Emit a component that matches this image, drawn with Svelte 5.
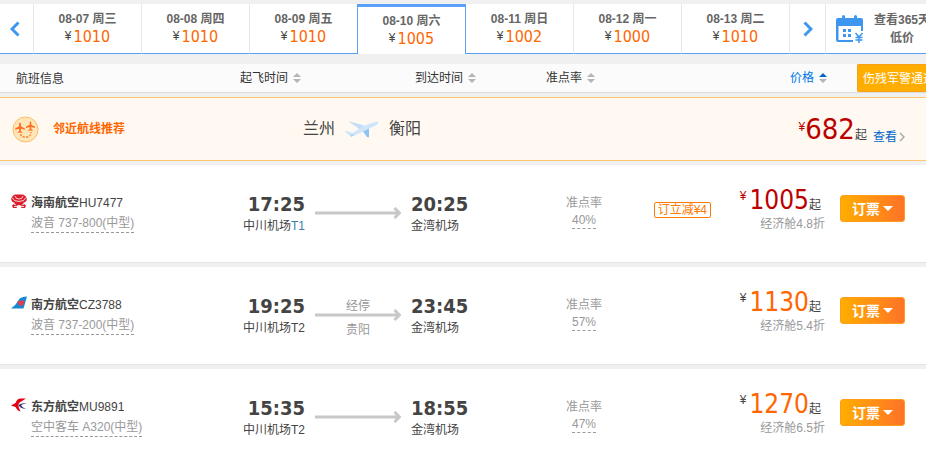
<script>
  const days = [
    { date: '08-07 周三', price: 1010 },
    { date: '08-08 周四', price: 1010 },
    { date: '08-09 周五', price: 1010 },
    { date: '08-10 周六', price: 1005 },
    { date: '08-11 周日', price: 1002 },
    { date: '08-12 周一', price: 1000 },
    { date: '08-13 周二', price: 1010 }
  ];
  let selected = $state(3);

  const flights = [
    { logo: 'hu', airline: '海南航空', no: 'HU7477', plane: '波音 737-800(中型)', dep: '17:25', from: '中川机场', terminal: 'T1', arr: '20:25', to: '金湾机场', rate: '40%', tag: '¥4', price: 1005, cabin: '经济舱4.8折', lowest: true },
    { logo: 'cz', airline: '南方航空', no: 'CZ3788', plane: '波音 737-200(中型)', dep: '19:25', from: '中川机场', terminal: 'T2', stop: '贵阳', arr: '23:45', to: '金湾机场', rate: '57%', price: 1130, cabin: '经济舱5.4折' },
    { logo: 'mu', airline: '东方航空', no: 'MU9891', plane: '空中客车 A320(中型)', dep: '15:35', from: '中川机场', terminal: 'T2', arr: '18:55', to: '金湾机场', rate: '47%', price: 1270, cabin: '经济舱6.5折' }
  ];
</script>

{#snippet sortIcon()}
  <svg class="sort" width="8" height="10" viewBox="0 0 8 10" aria-hidden="true">
    <path class="up" d="M0 4 4 0l4 4z" /><path d="M0 6h8l-4 4z" />
  </svg>
{/snippet}

<div class="page">
  <nav class="dates" aria-label="日期">
    <button class="step prev" aria-label="前一天">
      <svg width="10" height="16" viewBox="0 0 10 16"><path d="M8.5 1.5 2 8l6.500 6.500" /></svg>
    </button>
    {#each days as day, i}
      <button class="day" class:active={selected === i} onclick={() => (selected = i)}>
        <b>{day.date}</b>
        <span class="fare"><i>¥</i>{day.price}</span>
      </button>
    {/each}
    <button class="step next" aria-label="后一天">
      <svg width="10" height="16" viewBox="0 0 10 16"><path d="M1.500 1.500 8 8l-6.500 6.500" /></svg>
    </button>
    <a class="calendar" href="#calendar">
      <svg width="28" height="28" viewBox="0 0 28 28" aria-hidden="true">
        <path fill="#3e97ee" d="M2 3h4V1.500a1.500 1.500 0 0 1 3 0V3h9V1.500a1.500 1.500 0 0 1 3 0V3h4q2 0 2 2v11h-2v-5H2.500v14H17v2H2q-2 0-2-2V5q0-2 2-2z" />
        <path fill="#3e97ee" d="M7 14h3v3H7zM12 14h3v3h-3zM7 19h3v3H7zM12 19h3v3h-3z" />
        <path fill="none" stroke="#3e97ee" stroke-width="1.500" d="m19.500 18 3.500 4 3.500-4M23 22v6M19.500 22.500h7M19.500 25h7" />
      </svg>
      <span>查看365天<br />低价</span>
    </a>
  </nav>

  <div class="head">
    <span class="h-info">航班信息</span>
    <button class="h-dep">起飞时间{@render sortIcon()}</button>
    <button class="h-arr">到达时间{@render sortIcon()}</button>
    <button class="h-rate">准点率{@render sortIcon()}</button>
    <button class="h-price sorted">价格{@render sortIcon()}</button>
    <a class="notice" href="#notice">伤残军警通道</a>
  </div>

  <section class="nearby">
    <svg width="27" height="27" viewBox="0 0 27 27" aria-hidden="true">
      <circle cx="13.500" cy="13.500" r="12.500" fill="#ffe6b8" stroke="#fdbc6c" />
      <g fill="#ff6d22">
        <path d="M8 6.500q.9 0 .9 1.500v2.200l4 2.300v1.300l-4-1v2.400l1.400 1v.9L8 16.500l-2.300.6v-.9l1.400-1v-2.400l-4 1v-1.300l4-2.300V8q0-1.500.9-1.500z" />
        <path d="M18.500 5.500q.8 0 .8 1.300v1.900l3.700 2v1.200l-3.700-.9v2.200l1.300.9v.8l-2.100-.5-2.100.5v-.8l1.300-.9V11l-3.700.9v-1.200l3.700-2V6.800q0-1.300.8-1.300z" />
      </g>
      <path fill="none" stroke="#ff6d22" stroke-width="1.300" stroke-dasharray="2 1.500" d="M8.500 18q1 3 4 3h3q3 0 3.500-5" />
    </svg>
    <strong>邻近航线推荐</strong>
    <div class="cities">
      <span>兰州</span>
      <svg width="34" height="18" viewBox="0 0 34 18" aria-hidden="true">
        <path fill="#c2ddf7" d="M3 1l16 4.500-4 4z" />
        <path fill="#cfe5fa" d="M1 11l3 .5 3.500 1.500L19 5.800 28 2.500q5-1.500 5.500 0 0 1.700-5 4L14 13.500q-5 2.300-8.500 2.500L2 13.500 0 11.500z" />
        <path fill="#8fc4f2" d="M18 11.500l6-3v9l-2-.5z" />
        <path fill="#a9d1f6" d="M5 15l4-.5 1 .5-4 2z" />
      </svg>
      <span>衡阳</span>
    </div>
    <div class="best"><i>¥</i><span class="amount">682</span><span>起</span></div>
    <a class="view" href="#view">查看<svg width="6" height="10" viewBox="0 0 6 10" aria-hidden="true"><path d="m1 1 4 4-4 4" /></svg></a>
  </section>

  {#each flights as f}
    <article class="flight">
      <div class="info">
        <svg width="16" height="14" viewBox="0 0 16 14" aria-hidden="true">
          {#if f.logo === 'hu'}
            <path fill="#dc1f2d" d="M4 .5h8Q16 2 15.800 6q-.8 2.500-4 3l3.200 2.500-1 2.500H10l1-2-3-1-3 1 1 2H2l-1-2.500L4.200 9Q1 8.500.2 6 0 2 4 .5z" />
            <path fill="none" stroke="#fff" stroke-width=".8" d="M1 3.500q1.500 4 7 4t7-4M4 2q.5 3 4 3t4-3M3 10l2 1M13 10l-2 1M3 12.500h2M11 12.500h2" />
            <circle cx="8" cy="2.500" r="1.700" fill="#dc1f2d" />
          {:else if f.logo === 'cz'}
            <path fill="#178bd0" d="M0 12.500Q5 9 8 3.500 9.500.8 16 .5L12.500 12.500z" />
            <path fill="#e73b50" d="M6 6l3-1.500 1 1 1-1.500 2.500 1-1 3.500-2 1-1 1.500-.5-2.500-2 1 .5-2z" />
          {:else}
            <path fill="#e60012" d="M15 .5H9Q6 .8 4.500 5L0 7.500 4.500 9q2 4 5 4.500L8 10Q6 5 11 3z" />
            <path fill="#24246e" d="M7.500 7Q11 4.500 16 5.500q-5 .3-6 2 1.500 2 5 3.500Q9 10.500 7.500 7z" />
          {/if}
        </svg>
        <div>
          <div class="name"><strong>{f.airline}</strong>{f.no}</div>
          <span class="plane">{f.plane}</span>
        </div>
      </div>
      <div class="dep"><time>{f.dep}</time><span>{f.from}<em class:first={f.terminal === 'T1'}>{f.terminal}</em></span></div>
      <div class="route">
        <span>{f.stop ? '经停' : ''}</span>
        <svg width="86" height="12" viewBox="0 0 86 12" aria-hidden="true"><path d="M0 6h84M79.500 1l5 5-5 5" /></svg>
        <span>{f.stop ?? ''}</span>
      </div>
      <div class="arr"><time>{f.arr}</time><span>{f.to}</span></div>
      <div class="rate"><span>准点率</span><span class="percent">{f.rate}</span></div>
      <div class="promo">{#if f.tag}<span>订立减{f.tag}</span>{/if}</div>
      <div class="price" class:lowest={f.lowest}>
        <div class="sum"><i>¥</i><span class="amount">{f.price}</span><span>起</span></div>
        <span class="cabin">{f.cabin}</span>
      </div>
      <button class="book">订票<span class="caret"></span></button>
    </article>
  {/each}
</div>

<style>
  :global(body) { background: #f0f0f0; }
  .page {
    padding-top: 4px;
    overflow: hidden;
    color: #444;
    font: 12px/18px "Liberation Sans", "Noto Sans CJK SC", sans-serif;
  }
  button { margin: 0; padding: 0; border: 0; background: none; color: inherit; font: inherit; cursor: pointer; }
  a { color: inherit; text-decoration: none; }
  i, em { font-style: normal; }
  svg { display: block; flex: none; }
  span { white-space: nowrap; }

  .dates { display: flex; height: 50px; background: #fff; }
  .dates > * { box-sizing: border-box; border-bottom: 1px solid #579ff0; border-left: 1px solid #e8e8e8; }
  .step { flex: 0 0 36px; display: flex; align-items: center; justify-content: center; }
  .step.prev { flex-basis: 33px; border-left: 0; padding-right: 4px; }
  .step path { fill: none; stroke: #3e97ee; stroke-width: 3; }
  .day { flex: 0 0 108px; display: flex; flex-direction: column; align-items: center; padding-top: 6px; }
  .day b { color: #666; }
  .day.active {
    flex-basis: 109px;
    margin-right: -1px;
    z-index: 1;
    border: solid #5a9ff8;
    border-width: 3px 1px 0;
    padding-top: 5px;
    background: #fff;
  }
  .fare { display: flex; gap: 2px; color: #ff6600; font-family: "DejaVu Sans Condensed", "Noto Sans", sans-serif; font-size: 16px; }
  .fare i { color: #444; font-family: "Liberation Sans", sans-serif; font-size: 12px; line-height: 16px; }
  .calendar { flex: 1 0 110px; display: flex; align-items: center; gap: 10px; padding-left: 10px; color: #666; font-weight: bold; text-align: center; }

  .head { display: flex; height: 28px; margin: 10px 0 4px; border-bottom: 1px solid #ddd; background: #fbfbfb; color: #333; line-height: 30px; }
  .head button { display: flex; align-items: center; gap: 5px; text-align: left; }
  .h-info { flex: 0 0 224px; padding-left: 16px; }
  .h-dep { flex: 0 0 175px; }
  .h-arr { flex: 0 0 131px; }
  .h-rate { flex: 1 0 131px; }
  .h-price { flex: 0 0 67px; }
  .sort { fill: #b5b5b5; }
  .head .sorted { color: #0077e6; }
  .sorted .up { fill: #0066cc; }
  .notice { flex: 0 0 69px; box-sizing: border-box; height: 28px; padding-left: 5px; overflow: hidden; border: 1px solid #f9a01b; border-width: 1px 0 1px 1px; border-radius: 2px 0 0 2px; background: #ffae00; color: #fff; line-height: 28px; white-space: nowrap; }

  .nearby { display: flex; align-items: center; height: 62px; padding: 0 21px 0 12px; border: solid #ffc670; border-width: 1px 0; background: #fff9f1; }
  .nearby strong { flex: 0 0 250px; margin-left: 14px; color: #ff6600; line-height: 20px; }
  .cities { display: flex; align-items: center; gap: 10px; font-size: 16px; line-height: 20px; }
  .best { display: flex; align-items: baseline; margin-left: auto; }
  .best i { align-self: flex-start; color: #b00; line-height: 30px; }
  .best .amount { color: #b00; font-family: "DejaVu Sans Condensed", "Noto Sans", sans-serif; font-size: 29px; line-height: 34px; }
  .view { display: flex; align-items: center; align-self: flex-end; gap: 2px; margin: 0 0 14px 6px; color: #0066cc; }
  .view path { fill: none; stroke: #aaa; stroke-width: 1.5; }

  .flight {
    display: grid;
    grid-template-columns: 232px 72px 86px 155px 56px minmax(100px, 1fr) 113px 80px;
    height: 97px;
    margin-top: 4px;
    padding: 0 21px 0 11px;
    border-bottom: 1px solid #e4e4e4;
    background: #fff;
  }
  .info { display: flex; gap: 4px; padding-top: 29px; }
  .name { margin-bottom: 2px; }
  .plane { display: inline-block; border-bottom: 1px dashed #999; color: #999; }
  .dep, .arr { display: flex; flex-direction: column; padding-top: 27px; }
  .dep { align-items: flex-end; padding-right: 10px; }
  .arr { padding-left: 10px; }
  time { font: bold 20px/25px "DejaVu Sans Condensed", "DejaVu Sans", sans-serif; }
  .first { color: #3a7cb0; }
  .route { display: flex; flex-direction: column; align-items: center; padding-top: 30px; color: #999; }
  .route span { height: 12px; }
  .route path { fill: none; stroke: #c8c8c8; stroke-width: 3; }
  .rate { display: flex; flex-direction: column; align-items: center; padding-top: 29px; color: #999; }
  .percent { height: 16px; line-height: 16px; border-bottom: 1px dashed #999; }
  .promo { padding-top: 36px; padding-right: 1px; text-align: right; }
  .promo span { display: inline-block; padding: 0 3px; border: 1px solid #ff7a00; border-radius: 2px; color: #ff7a00; line-height: 14px; }
  .price { display: flex; flex-direction: column; align-items: flex-end; padding-top: 20px; }
  .sum { display: flex; align-items: baseline; padding-right: 4px; }
  .sum i { align-self: flex-start; margin-right: 3px; line-height: 22px; }
  .sum .amount { color: #ff6600; font-family: "DejaVu Sans Condensed", "Noto Sans", sans-serif; font-size: 26px; line-height: 30px; }
  .lowest i, .lowest .amount { color: #b00; }
  .cabin { color: #999; }
  .book {
    display: flex;
    align-items: center;
    justify-content: center;
    gap: 3px;
    width: 65px;
    height: 27px;
    margin: 30px 0 0 15px;
    border: 1px solid #ff9c1a;
    border-radius: 3px;
    background: linear-gradient(90deg, #ffae00, #ff7328);
    color: #fff;
    font-size: 14px;
    font-weight: bold;
  }
  .caret { border: solid transparent; border-width: 5px 5px 0; border-top-color: #fff; }
</style>
